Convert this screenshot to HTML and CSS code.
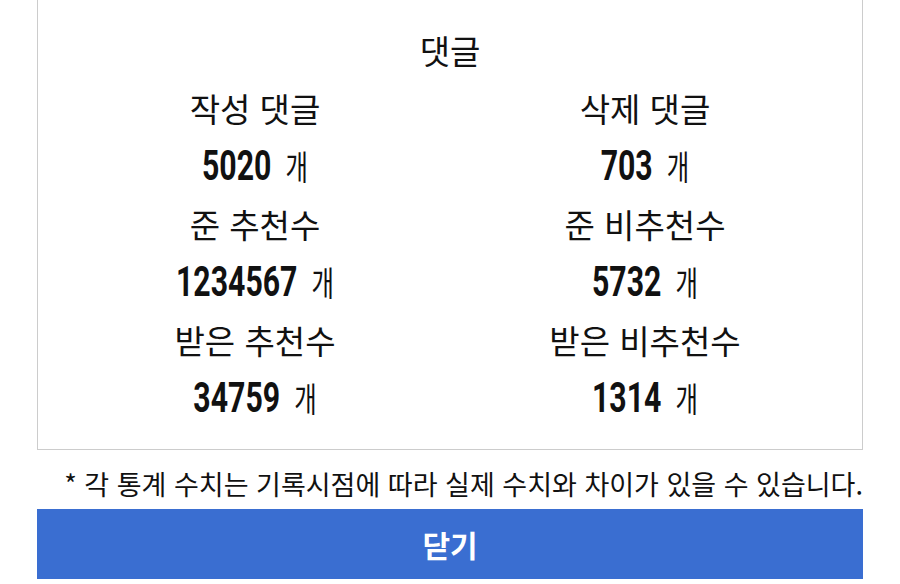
FILE: index.html
```html
<!DOCTYPE html>
<html lang="ko">
<head>
<meta charset="UTF-8" />
<meta name="viewport" content="width=device-width, initial-scale=1" />
<title>활동 통계</title>
<link rel="stylesheet" href="styles.css">
</head>
<body>
<div class="stats">
  <h2 class="stats-title">댓글</h2>
  <div class="stats-grid">
    <div class="stat">
      <div class="stat-label">작성 댓글</div>
      <div class="stat-value"><b>5020</b> 개</div>
    </div>
    <div class="stat">
      <div class="stat-label">삭제 댓글</div>
      <div class="stat-value"><b>703</b> 개</div>
    </div>
    <div class="stat">
      <div class="stat-label">준 추천수</div>
      <div class="stat-value"><b>1234567</b> 개</div>
    </div>
    <div class="stat">
      <div class="stat-label">준 비추천수</div>
      <div class="stat-value"><b>5732</b> 개</div>
    </div>
    <div class="stat">
      <div class="stat-label">받은 추천수</div>
      <div class="stat-value"><b>34759</b> 개</div>
    </div>
    <div class="stat">
      <div class="stat-label">받은 비추천수</div>
      <div class="stat-value"><b>1314</b> 개</div>
    </div>
  </div>
</div>

<p class="note">* 각 통계 수치는 기록시점에 따라 실제 수치와 차이가 있을 수 있습니다.</p>

<button class="close">닫기</button>
</body>
</html>
```

FILE: styles.css
```css
body { margin: 0; background: #fff; color: #111; font-family: "Noto Sans CJK KR", "Noto Sans", sans-serif; }
.stats { margin: -1px 37px 0; border: 1px solid #ccc; padding: 21px 22px 22px; text-align: center; }
.stats-title { margin: 0; font-size: 33px; font-weight: normal; line-height: 58px; }
.stats-grid { display: grid; grid-template-columns: 1fr 1fr; }
.stat-label { font-size: 33px; line-height: 58px; }
/* counts use a narrow bold figure, so the whole line is squeezed around its centre */
.stat-value { font-size: 34px; line-height: 58px; transform: scaleX(.72); }
.stat-value b { font-family: Roboto, "Liberation Sans", sans-serif; font-size: 42px; margin-right: 10px; }
.note { margin: 0; padding: 14px 37px 0 0; text-align: right; font-size: 27px; line-height: 40px; }
.close { display: block; width: 826px; height: 70px; margin: 5px 37px 0; border: none; background: #3a6ed1; color: #fff; font-family: "Noto Sans CJK KR", sans-serif; font-size: 30px; font-weight: bold; cursor: pointer; }
```
